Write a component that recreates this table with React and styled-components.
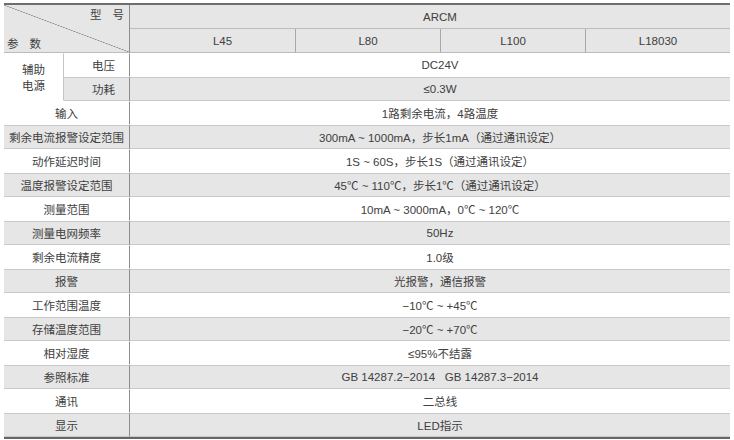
import React from 'react';
import styled, { createGlobalStyle } from 'styled-components';

const GlobalStyle = createGlobalStyle`
  body {
    margin: 0;
    background: #fff;
    font-family: "Liberation Sans", "Noto Sans CJK SC", sans-serif;
  }
`;

const Page = styled.div`
  padding: 3px 4px 0 4px;
`;

const Table = styled.table`
  width: 726px;
  table-layout: fixed;
  border-collapse: separate;
  border-spacing: 0;
  border-top: 2px solid #6e6e6e;
  border-bottom: 2px solid #666;
  font-size: 11.5px;
  color: #404040;
`;

const Cell = styled.td`
  height: 22px;
  padding: 0 0 0 ${p => p.$indent || 0}px;
  text-align: center;
  vertical-align: middle;
  white-space: pre;
  background: ${p => (p.$shade ? '#e6e6e6' : '#fff')};
  border-top: 1px solid ${p => (p.$shade ? '#c8c8c8' : '#fff')};
  border-bottom: 1px solid ${p => (p.$shade ? '#c8c8c8' : '#fff')};
  border-right: ${p => (p.$divider ? '1px solid #8c8c8c' : 'none')};
  border-left: ${p => (p.$split ? '1px solid #a8a8a8' : 'none')};
`;

const HeadCell = styled(Cell)`
  background: #e6e6e6;
  border-top: none;
  border-bottom: 1px solid #bcbcbc;
`;

const CornerCell = styled.th`
  padding: 0;
  font-weight: normal;
  background:
    linear-gradient(to top right, transparent calc(50% - 0.6px), #858585 50%, transparent calc(50% + 0.6px)),
    #e6e6e6;
  border-right: 1px solid #8c8c8c;
  border-bottom: 1px solid #bcbcbc;
`;

const CornerInner = styled.div`
  height: 47px;
  display: flex;
  flex-direction: column;
  justify-content: space-between;
  padding: 2px 5px 0 3px;
  box-sizing: border-box;
  line-height: 16px;
`;

const CornerLabel = styled.div`
  display: flex;
  gap: 11px;
  justify-content: ${p => (p.$right ? 'flex-end' : 'flex-start')};
`;

const GroupCell = styled(Cell)`
  line-height: 16px;
  border-right: 1px solid #c4c4c4;
  padding-top: 2px;
`;

const rows = [
  ['输入', '1路剩余电流，4路温度'],
  ['剩余电流报警设定范围', '300mA ~ 1000mA，步长1mA（通过通讯设定）'],
  ['动作延迟时间', '1S ~ 60S，步长1S（通过通讯设定）'],
  ['温度报警设定范围', '45℃ ~ 110℃，步长1℃（通过通讯设定）'],
  ['测量范围', '10mA ~ 3000mA，0℃ ~ 120℃'],
  ['测量电网频率', '50Hz'],
  ['剩余电流精度', '1.0级'],
  ['报警', '光报警，通信报警'],
  ['工作范围温度', '−10℃ ~ +45℃'],
  ['存储温度范围', '−20℃ ~ +70℃'],
  ['相对湿度', '≤95%不结露'],
  ['参照标准', 'GB 14287.2−2014   GB 14287.3−2014'],
  ['通讯', '二总线'],
  ['显示', 'LED指示'],
];

const models = ['L45', 'L80', 'L100', 'L18030'];

export default function App() {
  return (
    <Page>
      <GlobalStyle />
      <Table>
        <colgroup>
          <col style={{ width: 60 }} />
          <col style={{ width: 66 }} />
          <col style={{ width: 165 }} />
          <col style={{ width: 145 }} />
          <col style={{ width: 145 }} />
          <col style={{ width: 145 }} />
        </colgroup>
        <tbody>
          <tr>
            <CornerCell colSpan={2} rowSpan={2}>
              <CornerInner>
                <CornerLabel $right>
                  <span>型</span>
                  <span>号</span>
                </CornerLabel>
                <CornerLabel>
                  <span>参</span>
                  <span>数</span>
                </CornerLabel>
              </CornerInner>
            </CornerCell>
            <HeadCell colSpan={4} $indent={20}>ARCM</HeadCell>
          </tr>
          <tr>
            {models.map((m, i) => (
              <HeadCell key={m} $split={i > 0} $indent={i === 0 ? 20 : 0}>
                {m}
              </HeadCell>
            ))}
          </tr>
          <tr>
            <GroupCell rowSpan={2}>
              辅助
              <br />
              电源
            </GroupCell>
            <Cell $divider $indent={14}>电压</Cell>
            <Cell colSpan={4} $indent={20}>DC24V</Cell>
          </tr>
          <tr>
            <Cell $shade $divider $indent={14}>功耗</Cell>
            <Cell $shade colSpan={4} $indent={20}>≤0.3W</Cell>
          </tr>
          {rows.map(([label, value], i) => (
            <tr key={label}>
              <Cell colSpan={2} $shade={i % 2 === 1} $divider>
                {label}
              </Cell>
              <Cell colSpan={4} $shade={i % 2 === 1} $indent={20}>
                {value}
              </Cell>
            </tr>
          ))}
        </tbody>
      </Table>
    </Page>
  );
}
